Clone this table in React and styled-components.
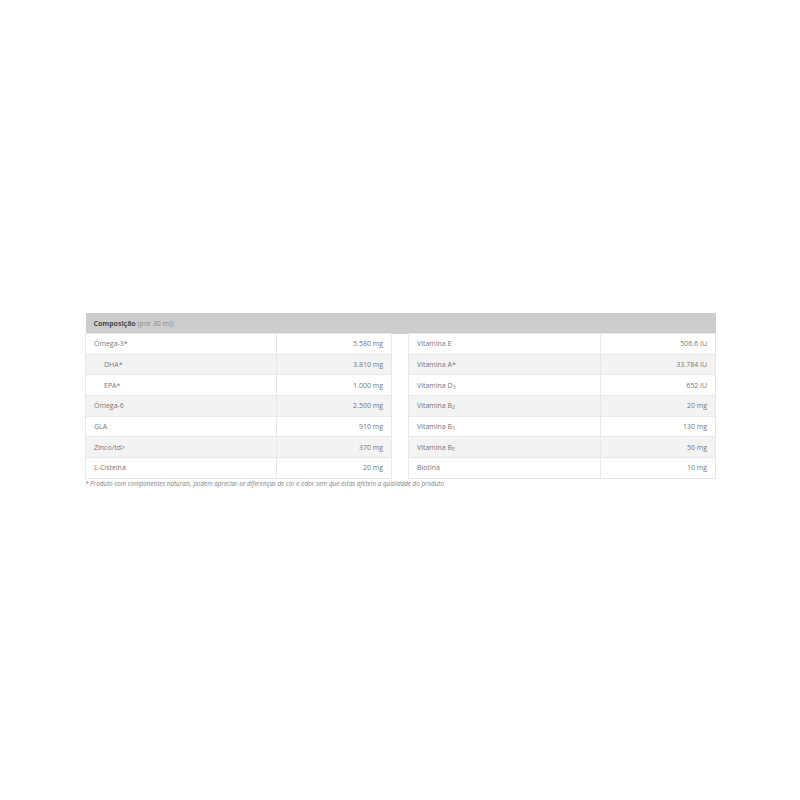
import styled, { createGlobalStyle } from 'styled-components'

const Global = createGlobalStyle`
  body {
    margin: 0;
    background: #fff;
    font-family: "Open Sans", "Liberation Sans", sans-serif;
  }
`;

const Wrap = styled.div`
  width: 630px;
  margin: 313px auto 0;
`;

const Table = styled.table`
  width: 630px;
  border-collapse: collapse;
  table-layout: fixed;
  font-size: 7px;
  color: #777;
`;

const Head = styled.th`
  background: #cdcdcd;
  height: 20px;
  padding: 0 8px;
  text-align: left;
  font-weight: 700;
  color: #4a4a4a;
  span {
    font-weight: 400;
    color: #8a8a8a;
  }
`;

const Row = styled.tr`
  height: 20.7px;
`;

const Cell = styled.td`
  padding: 0 8px;
  padding-left: ${p => (p.$indent ? '18px' : '8px')};
  border: 1px solid #e8e8e8;
  background: ${p => (p.$alt ? '#f3f3f3' : '#fff')};
  text-align: ${p => (p.$num ? 'right' : 'left')};
  white-space: nowrap;
  sub {
    font-size: 5px;
    vertical-align: -1px;
  }
`;

const Spacer = styled.td`
  border: none;
  background: #fff;
`;

const Note = styled.p`
  margin: 0;
  font-size: 6.3px;
  font-style: italic;
  color: #808080;
`;

const left = [
  ['Ómega-3*', '5.580 mg'],
  ['DHA*', '3.810 mg', true],
  ['EPA*', '1.000 mg', true],
  ['Ómega-6', '2.500 mg'],
  ['GLA', '910 mg'],
  ['Zinco/td>', '370 mg'],
  ['L-Cisteína', '20 mg'],
];

const right = [
  [<>Vitamina E</>, '506.6 IU'],
  [<>Vitamina A*</>, '33.784 IU'],
  [<>Vitamina D<sub>3</sub></>, '652 IU'],
  [<>Vitamina B<sub>2</sub></>, '20 mg'],
  [<>Vitamina B<sub>3</sub></>, '130 mg'],
  [<>Vitamina B<sub>5</sub></>, '50 mg'],
  [<>Biotina</>, '10 mg'],
];

export default function App() {
  return (
    <>
      <Global />
      <Wrap>
        <Table>
          <colgroup>
            <col style={{ width: 191 }} />
            <col style={{ width: 115 }} />
            <col style={{ width: 17 }} />
            <col style={{ width: 192 }} />
            <col style={{ width: 115 }} />
          </colgroup>
          <thead>
            <tr>
              <Head colSpan={5}>
                Composição <span>(por 30 ml):</span>
              </Head>
            </tr>
          </thead>
          <tbody>
            {left.map((l, i) => (
              <Row key={i}>
                <Cell $alt={i % 2 === 1} $indent={l[2]}>{l[0]}</Cell>
                <Cell $alt={i % 2 === 1} $num>{l[1]}</Cell>
                <Spacer />
                <Cell $alt={i % 2 === 1}>{right[i][0]}</Cell>
                <Cell $alt={i % 2 === 1} $num>{right[i][1]}</Cell>
              </Row>
            ))}
          </tbody>
        </Table>
        <Note>
          * Produto com componentes naturais, podem apreciar-se diferenças de cor e odor sem que estas afetem a qualidade do produto
        </Note>
      </Wrap>
    </>
  )
}
